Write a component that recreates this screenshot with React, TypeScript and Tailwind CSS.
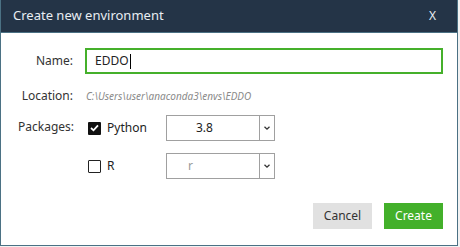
import React from "react";

function Chevron() {
  return (
    <svg width="8" height="6" viewBox="0 0 8 6" fill="none">
      <path d="M1.5 1.8 L4 4.2 L6.5 1.8" stroke="#333" strokeWidth="1.3" />
    </svg>
  );
}

function Select({ value, muted, pad }: { value: string; muted?: boolean; pad: string }) {
  return (
    <div className="flex h-[26px] w-[109px] border border-[#a0a0a0] bg-white">
      <div className={`flex flex-1 items-center ${pad} text-[12px] ${muted ? "text-[#9a9a9a]" : "text-[#222]"}`}>{value}</div>
      <div className="flex w-[15px] items-center justify-center border-l border-[#a0a0a0]">
        <Chevron />
      </div>
    </div>
  );
}

export default function App() {
  const font = { fontFamily: '"Noto Sans", "Open Sans", sans-serif' };
  return (
    <div className="h-[247px] w-[460px] overflow-hidden bg-[#f2f2f2]" style={font}>
      <div className="flex h-[246px] w-[458px] flex-col border-x border-b border-[#4b7184] bg-white">
        <div className="flex h-[33px] shrink-0 items-center justify-between border-b border-[#4b7184] bg-[#243447] pl-[12px] pr-[21px] text-[13px] text-[#e8edf2]">
          <span>Create new environment</span>
          <span className="text-[12px]">X</span>
        </div>
        <div className="flex flex-col pr-[14px]">
          <div className="mt-[15px] flex items-center">
            <div className="w-[72px] text-right text-[12px] text-[#333]">Name:</div>
            <div className="ml-[12px] flex h-[26px] flex-1 items-center border-2 border-[#45b02b] pl-[8px] text-[12px] text-[#222]">
              EDDO<span className="ml-[1px] inline-block h-[15px] w-[1px] bg-black" />
            </div>
          </div>
          <div className="mt-[13px] flex h-[18px] items-center">
            <div className="w-[72px] text-right text-[12px] text-[#333]">Location:</div>
            <div className="ml-[13px] text-[10px] italic text-[#8a8a8a]">C:\Users\user\anaconda3\envs\EDDO</div>
          </div>
          <div className="mt-[10px] flex items-center">
            <div className="w-[73px] self-start pt-[3px] text-right text-[12px] text-[#333]">Packages:</div>
            <div className="ml-[14px] flex flex-col">
              <div className="flex items-center">
                <div className="flex h-[13px] w-[13px] items-center justify-center rounded-[1px] bg-[#111]">
                  <svg width="9" height="8" viewBox="0 0 9 8">
                    <path d="M1 4 L3.5 6.3 L8 1.3" stroke="white" strokeWidth="1.8" fill="none" />
                  </svg>
                </div>
                <span className="ml-[6px] w-[59px] text-[12px] text-[#222]">Python</span>
                <Select value="3.8" pad="pl-[29px]" />
              </div>
              <div className="mt-[12px] flex items-center">
                <div className="h-[13px] w-[13px] rounded-[1px] border-[1.5px] border-[#222] bg-white" />
                <span className="ml-[6px] w-[59px] text-[12px] text-[#222]">R</span>
                <Select value="r" muted pad="pl-[21px]" />
              </div>
            </div>
          </div>
          <div className="mt-[24px] flex justify-end gap-[12px]">
            <button className="h-[26px] w-[59px] bg-[#e1e1e1] text-[12px] text-[#333]">Cancel</button>
            <button className="h-[26px] w-[59px] bg-[#43b02a] text-[12px] text-white">Create</button>
          </div>
        </div>
      </div>
    </div>
  );
}
